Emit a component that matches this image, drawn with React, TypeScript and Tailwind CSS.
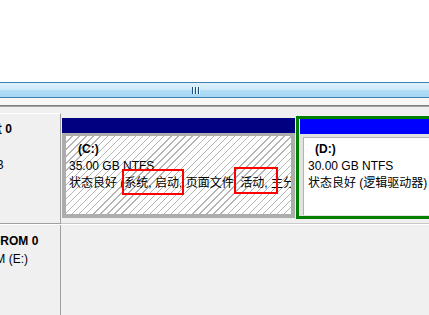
const font = "font-['Liberation_Sans','Noto_Sans_CJK_SC',sans-serif]"

function Grip() {
  return (
    <svg width="9" height="7" viewBox="0 0 9 7">
      <rect x="0" y="0" width="1" height="7" fill="#1d4e7c" />
      <rect x="3" y="0" width="1" height="7" fill="#1d4e7c" />
      <rect x="6" y="0" width="1" height="7" fill="#1d4e7c" />
      <rect x="1" y="0" width="1" height="7" fill="#eaf6fd" />
      <rect x="4" y="0" width="1" height="7" fill="#eaf6fd" />
      <rect x="7" y="0" width="1" height="7" fill="#eaf6fd" />
    </svg>
  )
}

function CPartition() {
  return (
    <div className="relative ml-[1px] mt-[5px] flex h-[100px] w-[233px] shrink-0 flex-col">
      <div className="h-[15px] shrink-0 bg-[#000080]" />
      <div className="flex min-h-0 flex-1 bg-[#adadad] px-[4px] pt-[3px] pb-[4px]">
        <div className="flex-1 overflow-hidden whitespace-nowrap bg-white bg-[image:repeating-linear-gradient(135deg,#ffffff_0px,#ffffff_4px,#b4b4b4_4px,#b4b4b4_5px)] pt-[5px] leading-[17px]">
          <div className="pl-[12px] font-bold">(C:)</div>
          <div className="pl-[3px]">35.00 GB NTFS</div>
          <div className="pl-[3px]">状态良好 (系统, 启动, 页面文件, 活动, 主分区)</div>
        </div>
      </div>
      {/* annotation boxes */}
      <div className="absolute left-[60px] top-[51px] h-[26px] w-[62px] border-2 border-[#ff0000]" />
      <div className="absolute left-[172px] top-[49px] h-[27px] w-[44px] border-2 border-[#ff0000]" />
    </div>
  )
}

function DPartition() {
  return (
    <div className="ml-[1px] mt-[3px] flex h-[103px] w-[160px] shrink-0 flex-col border-[3px] border-[#008000] px-[1px]">
      <div className="h-[15px] shrink-0 bg-[#0000ff]" />
      <div className="flex min-h-0 flex-1 bg-[#e2e2e2] pl-[3px] pt-[3px] pb-[1px]">
        <div className="flex-1 overflow-hidden whitespace-nowrap border-l border-t border-[#b4b4b4] bg-white pt-[3px] leading-[17px]">
          <div className="pl-[11px] font-bold">(D:)</div>
          <div className="pl-[4px]">30.00 GB NTFS</div>
          <div className="pl-[4px]">状态良好 (逻辑驱动器)</div>
        </div>
      </div>
    </div>
  )
}

export default function App() {
  return (
    <div className={`flex h-[315px] w-[429px] flex-col overflow-hidden bg-[#f0f0f0] text-[12px] text-black ${font}`}>
      <div className="h-[82px] shrink-0 bg-white" />

      {/* horizontal scrollbar */}
      <div className="flex h-[16px] shrink-0 items-start border-y border-[#3c7fb1] bg-[linear-gradient(#dff1fb,#cde9f9_50%,#b2def7_50%,#a6d7f4)] pl-[192px] pt-[4px]">
        <Grip />
      </div>

      <div className="h-[7px] shrink-0 bg-[#f7f7f7]" />
      <div className="h-[2px] shrink-0 border-t border-[#808080] bg-[#a0a0a0]" />
      <div className="h-[6px] shrink-0" />

      {/* disk 0 */}
      <div className="flex h-[110px] shrink-0">
        <div className="w-[61px] shrink-0 overflow-hidden whitespace-nowrap border-r border-t border-r-[#a0a0a0] border-t-white pt-[6px] leading-[18px]">
          <div className="ml-[-22px] font-bold">磁盘 0</div>
          <div className="ml-[-40px]">基本</div>
          <div className="ml-[-47px]">65.00 GB</div>
          <div className="ml-[-40px]">联机</div>
        </div>
        <div className="flex min-w-0 flex-1 overflow-hidden">
          <CPartition />
          <DPartition />
        </div>
      </div>

      <div className="flex h-[1px] shrink-0">
        <div className="w-[61px] bg-[#a0a0a0]" />
        <div className="flex-1 bg-[#c8c8c8]" />
      </div>

      {/* cd-rom 0 */}
      <div className="flex min-h-0 flex-1 border-t border-white">
        <div className="w-[61px] shrink-0 overflow-hidden whitespace-nowrap border-r border-[#a0a0a0] pt-[7px] leading-[18px]">
          <div className="ml-[-21px] font-bold">CD-ROM 0</div>
          <div className="ml-[-44px]">CD-ROM (E:)</div>
        </div>
        <div className="flex-1" />
      </div>
    </div>
  )
}
